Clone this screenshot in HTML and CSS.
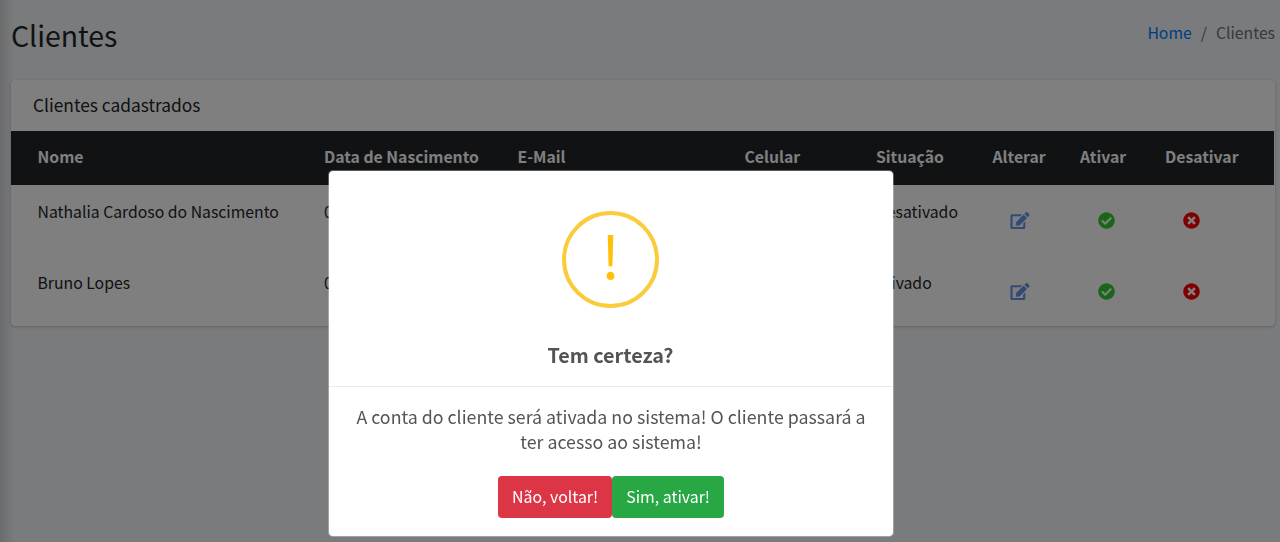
FILE: index.html
```html
<!DOCTYPE html>
<html lang="pt-BR">
<head>
<meta charset="utf-8">
<title>Clientes</title>
<link rel="stylesheet" href="styles.css">
</head>
<body>
<svg class="sprite" aria-hidden="true">
  <symbol id="edit" viewBox="0 0 576 512"><path d="M402.600 83.200l90.200 90.200c3.800 3.800 3.800 10 0 13.800L274.400 405.600l-92.800 10.300c-12.400 1.400-22.900-9.100-21.500-21.500l10.300-92.800L388.800 83.200c3.800-3.800 10-3.800 13.800 0zm162-22.900l-48.800-48.800c-15.200-15.200-39.900-15.200-55.200 0l-35.400 35.400c-3.800 3.800-3.800 10 0 13.800l90.200 90.200c3.800 3.800 10 3.800 13.800 0l35.400-35.400c15.200-15.300 15.200-40 0-55.200zM384 346.200V448H64V128h229.800c3.200 0 6.200-1.300 8.500-3.500l40-40c7.600-7.600 2.200-20.500-8.500-20.500H48C21.500 64 0 85.500 0 112v352c0 26.500 21.500 48 48 48h352c26.500 0 48-21.500 48-48V306.200c0-10.700-12.900-16-20.500-8.500l-40 40c-2.200 2.300-3.500 5.300-3.500 8.500z"/></symbol>
  <symbol id="check" viewBox="0 0 512 512"><path d="M504 256c0 136.967-111.033 248-248 248S8 392.967 8 256 119.033 8 256 8s248 111.033 248 248zM227.314 387.314l184-184c6.248-6.248 6.248-16.379 0-22.627l-22.627-22.627c-6.248-6.249-16.379-6.249-22.628 0L216 308.118l-70.059-70.059c-6.248-6.248-16.379-6.248-22.628 0l-22.627 22.627c-6.248 6.248-6.248 16.379 0 22.627l104 104c6.249 6.249 16.379 6.249 22.628.001z"/></symbol>
  <symbol id="times" viewBox="0 0 512 512"><path d="M256 8C119 8 8 119 8 256s111 248 248 248 248-111 248-248S393 8 256 8zm121.600 313.100c4.700 4.700 4.700 12.300 0 17L338 377.600c-4.700 4.700-12.300 4.700-17 0L256 312l-65.100 65.600c-4.700 4.700-12.300 4.700-17 0L134.400 338c-4.700-4.700-4.700-12.300 0-17l65.600-65-65.600-65.100c-4.700-4.700-4.700-12.300 0-17l39.600-39.600c4.700-4.700 12.300-4.700 17 0l65 65.700 65.100-65.600c4.700-4.700 12.300-4.700 17 0l39.600 39.600c4.700 4.700 4.700 12.300 0 17L312 256l65.600 65.100z"/></symbol>
</svg>

<div class="content">
  <header class="page-header">
    <h1 class="page-title">Clientes</h1>
    <nav class="breadcrumb"><a class="crumb-link" href="#">Home</a><span class="crumb-sep">/</span><span>Clientes</span></nav>
  </header>
  <section class="card">
    <h3 class="card-title">Clientes cadastrados</h3>
    <div class="row row-head">
      <span>Nome</span><span>Data de Nascimento</span><span>E-Mail</span><span>Celular</span><span>Situação</span><span>Alterar</span><span>Ativar</span><span>Desativar</span>
    </div>
    <div class="row">
      <span>Nathalia Cardoso do Nascimento</span><span>0</span><span></span><span></span><span>Desativado</span>
      <svg class="icon icon-edit"><use href="#edit"/></svg><svg class="icon icon-check"><use href="#check"/></svg><svg class="icon icon-times"><use href="#times"/></svg>
    </div>
    <div class="row">
      <span>Bruno Lopes</span><span>0</span><span></span><span></span><span>Ativado</span>
      <svg class="icon icon-edit"><use href="#edit"/></svg><svg class="icon icon-check"><use href="#check"/></svg><svg class="icon icon-times"><use href="#times"/></svg>
    </div>
  </section>
</div>

<div class="backdrop">
  <div class="modal" role="dialog">
    <div class="modal-head">
      <div class="warning"><span class="warning-mark">!</span></div>
      <h2 class="modal-title">Tem certeza?</h2>
    </div>
    <div class="modal-body">
      <p class="modal-text">A conta do cliente será ativada no sistema! O cliente passará a<br>ter acesso ao sistema!</p>
      <div class="actions"><button class="btn btn-danger">Não, voltar!</button><button class="btn btn-success">Sim, ativar!</button></div>
    </div>
  </div>
</div>
</body>
</html>
```
FILE: styles.css
```css
* { box-sizing: border-box; }

body {
  margin: 0;
  height: 542px;
  overflow: hidden;
  background: #f4f6f9;
  color: #212529;
  font: 15.77px/25px "Noto Sans CJK SC", sans-serif;
}

h1, h2, h3, p { margin: 0; font-weight: 400; }

.sprite { display: none; }

.content {
  height: 542px;
  padding: 15px 5px 0 11px;
  background: linear-gradient(to right, rgba(0, 0, 0, .12), transparent 14px);
}

.page-header {
  display: flex;
  justify-content: space-between;
  height: 65px;
}

.page-title { font-size: 28.4px; line-height: 40px; }

.breadcrumb { display: flex; line-height: 36px; color: #6c757d; }
.crumb-link { color: #007bff; text-decoration: none; }
.crumb-sep { padding: 0 9px; }

.card {
  height: 246px;
  border-radius: 4px;
  background: #fff;
  box-shadow: 0 0 1px rgba(0, 0, 0, .125), 0 1px 3px rgba(0, 0, 0, .2);
}

.card-title { height: 51px; padding: 12px 22px; font-size: 17.35px; }

.row {
  display: grid;
  grid-template-columns: 286.500px 193.500px 227px 131.500px 116.500px 87.500px 85px 1fr;
  height: 71px;
  padding: 14px 0 0 26.500px;
}

.row-head {
  height: 54px;
  margin-right: 1px;
  padding-top: 13px;
  background: #212529;
  color: #fff;
  font-size: 15.75px;
  font-weight: 700;
}

.icon { height: 17px; margin-top: 12.500px; }
.icon-edit { width: 20px; margin-left: 17.500px; fill: #6495ed; }
.icon-check { width: 17px; margin-left: 18px; fill: #32cd32; }
.icon-times { width: 17px; margin-left: 18px; fill: #f00; }

.backdrop {
  position: fixed;
  inset: 0;
  display: flex;
  justify-content: center;
  align-items: flex-start;
  padding: 170px 58px 0 0;
  background: rgba(0, 0, 0, .5);
}

.modal {
  width: 566px;
  height: 367px;
  border: 1px solid rgba(255, 255, 255, .3);
  border-radius: 5px;
  background: #fff;
  background-clip: padding-box;
  color: #545454;
  text-align: center;
}

.modal-head {
  height: 216px;
  padding: 40px 1px 0 0;
  border-bottom: 1px solid #e9ecef;
}

.warning {
  width: 97px;
  height: 97px;
  margin: 0 auto;
  border: 4px solid #facb3a;
  border-radius: 50%;
}

.warning-mark { display: block; font-size: 59px; line-height: 78px; color: #ffc107; }

.modal-title { margin-top: 34px; font-size: 19.8px; line-height: 26px; font-weight: 700; }

.modal-text { padding-top: 17px; font-size: 17.8px; line-height: 25px; }

.actions { display: flex; justify-content: center; margin-top: 22px; }

.btn {
  height: 42px;
  padding: 0 14px 1px;
  border: 0;
  border-radius: 4px;
  color: #fff;
  font: inherit;
  font-size: 15.9px;
}

.btn-danger { background: #dc3545; }
.btn-success { background: #28a745; }
```
